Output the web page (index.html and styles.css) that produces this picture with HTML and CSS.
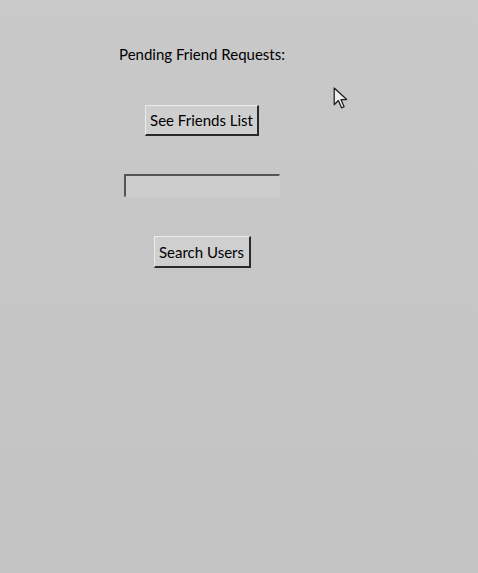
FILE: index.html
```html
<!DOCTYPE html>
<html lang="en">
<head>
    <meta charset="UTF-8">
    <meta name="viewport" content="width=device-width, initial-scale=1.0">
    <title>Friends</title>
    <link rel="stylesheet" href="styles.css">
</head>
<body>
    <div class="window">
        <p class="label">Pending Friend Requests:</p>
        <button class="tk-button friends-btn">See Friends List</button>
        <input type="text" class="entry">
        <button class="tk-button search-btn">Search Users</button>
    </div>
    <svg class="cursor" width="17" height="25" viewBox="0 0 16 24">
        <path d="M1 1 L1 17 L5 13 L8 20 L10.5 19 L7.5 12 L13 12 Z" fill="#ededed" stroke="#1e1e1e" stroke-width="1.2" stroke-linejoin="round"/>
    </svg>
</body>
</html>
```

FILE: styles.css
```css
body {
    margin: 0;
    height: 100vh;
    background: linear-gradient(180deg, #c9c9ca, #c3c3c4);
    font-family: 'Lato', 'Open Sans', sans-serif;
    overflow: hidden;
    position: relative;
}

.window {
    width: 404px;
    display: flex;
    flex-direction: column;
    align-items: center;
    padding-top: 45px;
}

.label {
    margin: 0;
    font-size: 15px;
    line-height: 19px;
    color: #000;
}

.tk-button {
    font-family: inherit;
    font-size: 15px;
    color: #000;
    white-space: nowrap;
    background: #cfcfd0;
    border-top: 1px solid #ececec;
    border-left: 1px solid #ececec;
    border-right: 2px solid #2a2a2a;
    border-bottom: 2px solid #2a2a2a;
    border-radius: 0;
    padding: 0;
    height: 31px;
}

.friends-btn {
    margin-top: 41px;
    width: 114px;
}

.search-btn {
    margin-top: 39px;
    width: 97px;
    height: 32px;
}

.entry {
    margin-top: 38px;
    width: 156px;
    height: 23px;
    box-sizing: border-box;
    background: #cdcdce;
    border-top: 2px solid #555;
    border-left: 2px solid #555;
    border-right: 1px solid #cbcbcb;
    border-bottom: 1px solid #cbcbcb;
    outline: none;
}

.cursor {
    position: absolute;
    left: 333px;
    top: 87px;
}
```
